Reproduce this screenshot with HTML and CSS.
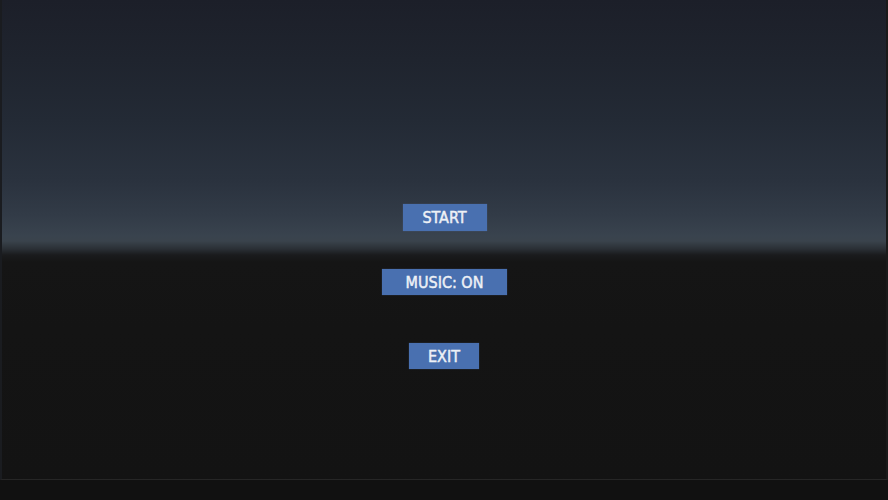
FILE: index.html
```html
<!DOCTYPE html>
<html lang="en">
<head>
<meta charset="utf-8">
<title>Menu</title>
<link rel="stylesheet" href="styles.css">
</head>
<body>
<div class="scene">
  <div class="viewport">
    <nav class="menu">
      <button class="menu-btn btn-start">START</button>
      <button class="menu-btn btn-music">MUSIC: ON</button>
      <button class="menu-btn btn-exit">EXIT</button>
    </nav>
  </div>
  <div class="footer-strip"></div>
</div>
</body>
</html>
```
FILE: styles.css
```css
html, body {
  margin: 0;
  padding: 0;
  width: 888px;
  height: 500px;
  overflow: hidden;
  background: #111111;
}

.scene {
  width: 888px;
  height: 500px;
  display: flex;
  flex-direction: column;
}

/* sky dome fading into a dark horizon */
.viewport {
  height: 480px;
  box-sizing: border-box;
  border-left: 2px solid #1a1c20;
  border-right: 2px solid #1a1a1a;
  border-bottom: 1px solid #262626;
  background: linear-gradient(to bottom,
    #1c1f29 0px,
    #1f242e 60px,
    #232a35 120px,
    #2a323e 180px,
    #323b47 215px,
    #39434e 236px,
    #3a434c 241px,
    #2a2f35 249px,
    #1a1b1d 255px,
    #151515 262px,
    #141414 330px,
    #131313 480px);
  display: flex;
  justify-content: center;
}

.menu {
  display: flex;
  flex-direction: column;
  align-items: center;
  padding-top: 204px;
}

.menu-btn {
  height: 27px;
  border: none;
  margin: 0;
  padding: 0;
  background: #4970b0;
  color: #eef1f6;
  font-family: "DejaVu Sans Condensed", "DejaVu Sans", sans-serif;
  font-stretch: condensed;
  font-size: 16px;
  font-weight: normal;
  -webkit-text-stroke: 0.45px #eef1f6;
  line-height: 28px;
  box-shadow: 0 0 1px rgba(90, 125, 180, 0.6);
}

.btn-start {
  width: 84px;
  margin-left: 1px;
}

.btn-music {
  width: 125px;
  height: 26px;
  line-height: 27px;
  margin-top: 38px;
  margin-left: 1px;
}

.btn-exit {
  width: 70px;
  height: 26px;
  line-height: 27px;
  margin-top: 48px;
}

.footer-strip {
  flex: 1;
  background: #111111;
}
```
